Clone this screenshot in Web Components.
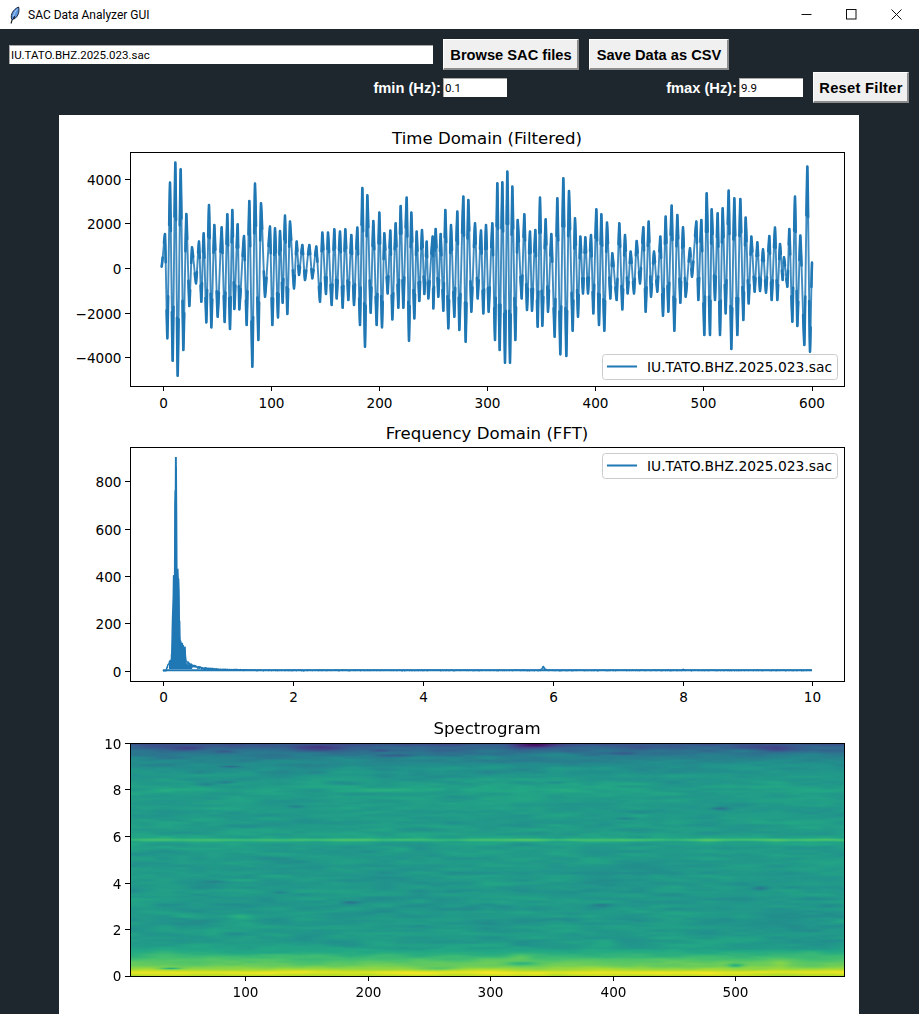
<!DOCTYPE html>
<html>
<head>
<meta charset="utf-8">
<title>SAC Data Analyzer GUI</title>
<style>
    html, body { margin: 0; padding: 0; height: 100%; overflow: hidden; background: #1e272e; }
</style>
</head>
<body>
<sac-window>
    <sac-titlebar slot="title">SAC Data Analyzer GUI</sac-titlebar>
    <sac-toolbar slot="tools">
        <sac-entry slot="file" style="width:424px">IU.TATO.BHZ.2025.023.sac</sac-entry>
        <sac-button slot="browse" style="width:136px">Browse SAC files</sac-button>
        <sac-button slot="save" style="width:140px">Save Data as CSV</sac-button>
        <sac-field slot="fmin" label="fmin (Hz):">0.1</sac-field>
        <sac-field slot="fmax" label="fmax (Hz):">9.9</sac-field>
        <sac-button slot="reset" style="width:96px;letter-spacing:.3px">Reset Filter</sac-button>
    </sac-toolbar>
    <sac-panel slot="panel">
        <sac-time-plot></sac-time-plot>
        <sac-fft-plot></sac-fft-plot>
        <sac-spectrogram></sac-spectrogram>
    </sac-panel>
</sac-window>

<script>
const FONT_UI = 'Roboto, "Open Sans", sans-serif';
const FONT_BOLD = '"Liberation Sans", Arial, sans-serif';
const FONT_PLOT = '"DejaVu Sans", sans-serif';
const BLUE = '#1f77b4';
const FILE_NAME = 'IU.TATO.BHZ.2025.023.sac';

// extremes of the trace, read off the reference crops (crop x, crop y, 3x scale)
const WAVE_LEFT = [315,342,330,188,346,128,362,148,379,282,396,382,417,365,431,340,447,255,463,315,485,322,502,283,517,270,533,313,552,348,568,243,585,191,603,250,630,320,645,325,660,333,675,287,690,305,710,365,727,375,748,375,769,380,787,338,804,338,823,328,840,335,856,328,874,345,892,323,907,204,922,226,940,303,958,278,973,340,991,332,1007,310,1022,258,1040,233,1054,278,1070,335,1086,330,1100,365,1118,350,1127,327,1142,342,1156,270,1173,315,1192,275,
    322,655,338,722,353,767,370,690,388,558,408,490,424,545,439,607,454,622,473,590,494,606,510,627,523,567,538,568,560,615,577,740,595,660,615,530,637,615,654,592,668,548,682,582,702,505,717,465,735,480,757,475,780,545,798,522,815,555,830,535,848,563,865,540,882,555,900,615,915,680,932,578,950,615,966,622,983,520,997,598,1015,563,1030,563,1047,662,1063,595,1078,543,1093,522,1105,535,1120,565,1135,530,1150,572,1165,625,1183,590,1198,630];
const WAVE_RIGHT = [10,230,25,240,45,310,63,332,78,315,97,310,112,190,127,187,142,155,157,200,173,300,193,283,210,335,226,330,240,233,257,298,274,342,292,235,310,175,327,213,345,295,361,350,376,352,393,345,409,268,424,283,441,308,457,400,478,310,495,345,512,395,530,363,550,322,566,305,582,395,601,350,617,290,635,257,652,285,669,322,690,385,709,305,724,300,740,220,755,268,773,280,788,265,806,212,823,235,841,237,857,293,874,350,892,367,909,388,928,348,945,323,960,372,972,412,988,327,1005,230,1021,347,1042,140,
    17,665,34,575,53,535,70,580,86,575,105,660,119,690,135,728,150,728,166,660,185,535,201,570,216,572,233,620,247,617,264,575,284,650,301,703,319,708,338,632,354,590,369,520,384,520,400,580,417,615,433,632,451,535,470,540,487,568,503,520,522,520,540,490,557,575,573,530,592,515,609,587,625,575,643,632,661,548,677,530,696,470,715,540,733,645,750,645,765,540,780,645,797,580,814,687,832,645,850,600,866,550,884,515,900,513,918,518,935,540,952,540,968,480,982,500,997,605,1012,618,1033,675,1050,695];

function rng(seed) {
    let s = seed;
    return () => {
        s = (s * 1664525 + 1013904223) >>> 0;
        return s / 4294967296;
    };
}

function lerpTable(table, x) {
    if (x <= table[0][0]) return table[0][1];
    for (let i = 1; i < table.length; i++) {
        if (x <= table[i][0]) {
            const a = table[i - 1], b = table[i];
            return a[1] + (b[1] - a[1]) * (x - a[0]) / (b[0] - a[0]);
        }
    }
    return table[table.length - 1][1];
}

// Everything in the svg is in page pixels, the viewBox takes care of the offset.
function axesSvg(o) {
    const { top, bottom, title, viewBox, xTicks, yTicks, xLabelY, inner = '', legend, titleY = top - 8 } = o;
    const left = 130, right = 844;
    let s = `<svg xmlns="http://www.w3.org/2000/svg" viewBox="${viewBox}" width="800" height="${viewBox.split(' ')[3]}">`;
    s += inner;
    s += `<text x="487" y="${titleY}" text-anchor="middle" font-size="16.6">${title}</text>`;
    xTicks.forEach(([x, label]) => {
        s += `<line x1="${x}" x2="${x}" y1="${bottom}" y2="${bottom + 5}" stroke="#000" shape-rendering="crispEdges"/>`;
        s += `<text x="${x}" y="${xLabelY}" text-anchor="middle" font-size="13.6">${label}</text>`;
    });
    yTicks.forEach(([y, label]) => {
        s += `<line x1="${left - 5}" x2="${left}" y1="${y}" y2="${y}" stroke="#000" shape-rendering="crispEdges"/>`;
        s += `<text x="${left - 8.5}" y="${y + 5}" text-anchor="end" font-size="13.6">${label}</text>`;
    });
    s += `<rect x="${left}.5" y="${top}.5" width="${right - left}" height="${bottom - top}" fill="none" stroke="#000" shape-rendering="crispEdges"/>`;
    if (legend !== undefined) {
        s += `<rect x="602.5" y="${legend}.5" width="235" height="25" rx="3" fill="#fff" fill-opacity=".8" stroke="#ccc"/>`;
        s += `<line x1="607" x2="637" y1="${legend + 12.5}" y2="${legend + 12.5}" stroke="${BLUE}" stroke-width="2"/>`;
        s += `<text x="647" y="${legend + 17.5}" font-size="13.85">${FILE_NAME}</text>`;
    }
    return s + '</svg>';
}

const plotStyle = `
    :host { display: block; position: relative; font-family: ${FONT_PLOT}; }
    svg { display: block; position: relative; }
    svg text { fill: #000; }
`;

class cWindow extends HTMLElement {
    constructor() {
        super();
        const template = document.createElement('template');
        template.innerHTML = `
            <style>
                :host { display: flex; flex-direction: column; height: 100vh; background: #1e272e; }
                .grow { flex: 1; min-height: 0; display: flex; padding-left: 59px; }
            </style>
            <slot name="title"></slot>
            <slot name="tools"></slot>
            <div class="grow"><slot name="panel"></slot></div>
        `;
        this.attachShadow({mode: 'open'});
        this.shadowRoot.appendChild(template.content.cloneNode(true));
    }
}

class cTitlebar extends HTMLElement {
    constructor() {
        super();
        const template = document.createElement('template');
        template.innerHTML = `
            <style>
                :host {
                    display: flex; align-items: center; height: 29px; background: #fff; color: #000;
                    font: 12px ${FONT_UI};
                }
                .icon { width: 18px; height: 18px; margin: 0 3px 0 7px; flex: none; }
                .name { flex: 1; white-space: nowrap; }
                .ctl { width: 45px; height: 29px; display: flex; align-items: center; justify-content: center; }
                .ctl svg { display: block; }
            </style>
            <svg class="icon" viewBox="0 0 18 18">
                <path d="M4 17.5 L6 11" stroke="#111" stroke-width="1.1" fill="none"/>
                <path d="M4.6 13 C3.4 8.5 6 3.5 11.6 1 C12.6 5 11.6 10.5 7 13 L7.4 10 L6 13.8 Z" fill="#5b93dc" stroke="#16223e" stroke-width="1"/>
                <path d="M10.4 3.2 C8.4 5 7 7.6 6.4 10.6" stroke="#bcd6f5" stroke-width=".9" fill="none"/>
            </svg>
            <span class="name"><slot></slot></span>
            <span class="ctl"><svg width="11" height="11" viewBox="0 0 11 11"><path d="M.5 5.5H10.5" stroke="#111" fill="none"/></svg></span>
            <span class="ctl"><svg width="11" height="11" viewBox="0 0 11 11"><rect x=".5" y=".5" width="9.5" height="9.5" stroke="#111" fill="none"/></svg></span>
            <span class="ctl"><svg width="11" height="11" viewBox="0 0 11 11"><path d="M.5 .5L10.5 10.5M10.5 .5L.5 10.5" stroke="#111" fill="none"/></svg></span>
        `;
        this.attachShadow({mode: 'open'});
        this.shadowRoot.appendChild(template.content.cloneNode(true));
    }
}

class cToolbar extends HTMLElement {
    constructor() {
        super();
        const template = document.createElement('template');
        template.innerHTML = `
            <style>
                :host { display: flex; flex-direction: column; gap: 2px; height: 86px; box-sizing: border-box; padding-top: 10px; }
                .row { display: flex; align-items: center; height: 31px; }
                .one { padding-left: 9px; gap: 10px; }
                .two { padding-right: 10px; }
                .fmin { width: 507px; display: flex; justify-content: flex-end; }
                .rest { flex: 1; display: flex; justify-content: flex-end; align-items: center; gap: 10px; }
            </style>
            <div class="row one">
                <slot name="file"></slot>
                <slot name="browse"></slot>
                <slot name="save"></slot>
            </div>
            <div class="row two">
                <div class="fmin"><slot name="fmin"></slot></div>
                <div class="rest"><slot name="fmax"></slot><slot name="reset"></slot></div>
            </div>
        `;
        this.attachShadow({mode: 'open'});
        this.shadowRoot.appendChild(template.content.cloneNode(true));
    }
}

class cEntry extends HTMLElement {
    constructor() {
        super();
        const template = document.createElement('template');
        template.innerHTML = `
            <style>
                :host {
                    display: block; box-sizing: border-box; height: 19px; background: #fff; color: #000;
                    font: normal 11.5px/18px ${FONT_UI}; padding-left: 1px; white-space: nowrap; overflow: hidden;
                    border-top: 1px solid #a8a8a8; border-left: 1px solid #a8a8a8;
                }
            </style>
            <slot></slot>
        `;
        this.attachShadow({mode: 'open'});
        this.shadowRoot.appendChild(template.content.cloneNode(true));
    }
}

class cButton extends HTMLElement {
    constructor() {
        super();
        const template = document.createElement('template');
        template.innerHTML = `
            <style>
                :host {
                    display: flex; align-items: center; justify-content: center; box-sizing: border-box; height: 31px;
                    background: #f0f0f0; color: #000; font: bold 14.67px ${FONT_BOLD}; white-space: nowrap;
                    border-style: solid; border-width: 1px 2px 2px 1px;
                    border-color: #fff #8c8c8c #8c8c8c #fff; padding: 1px 0 0 1px;
                }
            </style>
            <slot></slot>
        `;
        this.attachShadow({mode: 'open'});
        this.shadowRoot.appendChild(template.content.cloneNode(true));
    }
}

class cField extends HTMLElement {
    constructor() {
        super();
        const template = document.createElement('template');
        template.innerHTML = `
            <style>
                :host { display: flex; align-items: center; gap: 2px; color: #fff; font: bold 14.67px ${FONT_BOLD}; white-space: nowrap; }
                sac-entry { width: 64px; }
            </style>
            <span id="label"></span>
            <sac-entry><slot></slot></sac-entry>
        `;
        this.attachShadow({mode: 'open'});
        this.shadowRoot.appendChild(template.content.cloneNode(true));
    }

    connectedCallback() {
        this.shadowRoot.querySelector('#label').textContent = this.getAttribute('label');
    }
}

class cPanel extends HTMLElement {
    constructor() {
        super();
        const template = document.createElement('template');
        template.innerHTML = `
            <style>
                :host { display: block; width: 800px; background: #fff; overflow: hidden; }
            </style>
            <slot></slot>
        `;
        this.attachShadow({mode: 'open'});
        this.shadowRoot.appendChild(template.content.cloneNode(true));
    }
}

class cTimePlot extends HTMLElement {
    constructor() {
        super();
        this.attachShadow({mode: 'open'});
        const pts = [[305, 440, 60, 120]];
        const add = (arr, ox) => {
            for (let i = 0; i < arr.length; i += 2) pts.push([arr[i], arr[i + 1], ox, 120]);
        };
        add(WAVE_LEFT, 60);
        add(WAVE_RIGHT, 460);
        const page = pts.map(([x, y, ox, oy]) => [ox + x / 3, oy + y / 3]).sort((a, b) => a[0] - b[0]);
        page.push([460 + 1056 / 3, 120 + 428 / 3]);
        const rand = rng(5);
        // the slopes come out a bit paler in the reference, the tips heavy: two layers
        let pale = `M${page[0][0].toFixed(2)} ${page[0][1].toFixed(2)}`;
        let tips = '';
        for (let i = 1; i < page.length; i++) {
            const [x0, y0] = page[i - 1], [x1, y1] = page[i];
            const steps = 10;
            let prevX = x0, prevY = y0;
            for (let k = 1; k <= steps; k++) {
                const t = k / steps;
                // mostly straight flanks, so the tips stay narrow
                const e = .3 * (1 - Math.cos(Math.PI * t)) / 2 + .7 * t;
                const wob = (k < steps) ? (rand() - .5) * .7 : 0;
                const x = x0 + (x1 - x0) * t;
                const y = y0 + (y1 - y0) * e + wob;
                pale += `L${x.toFixed(2)} ${y.toFixed(2)}`;
                if (t <= .3 || t > .7) {
                    tips += `M${prevX.toFixed(2)} ${prevY.toFixed(2)}L${x.toFixed(2)} ${y.toFixed(2)}`;
                }
                prevX = x; prevY = y;
            }
        }
        this.shadowRoot.innerHTML = `<style>${plotStyle}</style>` + axesSvg({
            viewBox: '59 115 800 295', top: 152, bottom: 386, xLabelY: 408,
            title: 'Time Domain (Filtered)',
            xTicks: [[163.5,'0'],[271.5,'100'],[379.5,'200'],[487.5,'300'],[595.5,'400'],[703.5,'500'],[812,'600']],
            yTicks: [[179.5,'4000'],[223.5,'2000'],[268.5,'0'],[313.5,'\u22122000'],[357.5,'\u22124000']],
            inner: `<path d="${pale}" fill="none" stroke="${BLUE}" stroke-opacity=".85" stroke-width="1.9" stroke-linejoin="round"/>
                    <path d="${tips}" fill="none" stroke="${BLUE}" stroke-width="2.6" stroke-linecap="round"/>`,
            legend: 354
        });
    }
}

class cFftPlot extends HTMLElement {
    constructor() {
        super();
        this.attachShadow({mode: 'open'});
        const rand = rng(77);
        // upper outline of the spectrum, page px x / page px y
        const outline = [[162,671],[166,670.5],[168,663],[171,659],[172,635],[173.5,575],[174.6,567],[175,457],[176.5,457],[176.8,567],[178.8,567],[180,637],[184,647],[185.4,647],[186,660],[193,665],[203,667.5],[220,669],[260,670],[540,670],[542,668.5],[543.5,665],[545,668.5],[547,670],[682,670],[683,669],[685,670],[812,670]];
        let d = 'M163 671';
        for (let x = 163; x <= 812; x += 0.34) {
            const up = lerpTable(outline, x);
            const amp = 671 - up;
            const y = 671 - amp * Math.pow(rand(), 0.3);
            d += `L${x.toFixed(2)} ${y.toFixed(2)}`;
        }
        // the body around the peak reads as solid
        let body = 'M169 669';
        for (let x = 169; x <= 192; x += 0.5) body += `L${x} ${(lerpTable(outline, x) + (x > 175 && x < 177 ? 0 : 1.5 + rand() * 2)).toFixed(2)}`;
        body += 'L192 669Z';
        this.shadowRoot.innerHTML = `<style>${plotStyle}</style>` + axesSvg({
            viewBox: '59 410 800 295', top: 447, bottom: 681, xLabelY: 702,
            title: 'Frequency Domain (FFT)',
            xTicks: [[163.5,'0'],[293.5,'2'],[423.5,'4'],[553.5,'6'],[683.5,'8'],[812.5,'10']],
            yTicks: [[481.5,'800'],[529.5,'600'],[576.5,'400'],[623.5,'200'],[671.5,'0']],
            inner: `<path d="${body}" fill="${BLUE}"/>
                    <rect x="174.9" y="457" width="1.8" height="110" fill="${BLUE}"/>
                    <path d="${d}" fill="none" stroke="${BLUE}" stroke-width="1.4" stroke-linejoin="round"/>
                    <line x1="163" x2="812" y1="670.2" y2="670.2" stroke="${BLUE}" stroke-width="2"/>`,
            legend: 453
        });
    }
}

class cSpectrogram extends HTMLElement {
    constructor() {
        super();
        this.attachShadow({mode: 'open'});
        this.shadowRoot.innerHTML = `<style>${plotStyle}
                canvas { position: absolute; left: 71px; top: 38px; width: 714px; height: 233px; }
            </style>
            <canvas width="714" height="233"></canvas>` + axesSvg({
            viewBox: '59 705 800 309', top: 743, bottom: 976, xLabelY: 997, titleY: 734,
            title: 'Spectrogram',
            xTicks: [[245.5,'100'],[368.5,'200'],[490.5,'300'],[613.5,'400'],[735.5,'500']],
            yTicks: [[743.5,'10'],[789.5,'8'],[836.5,'6'],[883.5,'4'],[929.5,'2'],[976,'0']]
        });
        this.paint(this.shadowRoot.querySelector('canvas'));
    }

    paint(canvas) {
        const W = 714, H = 233;
        const ctx = canvas.getContext('2d');
        const img = ctx.createImageData(W, H);
        const viridis = [[68,1,84],[72,36,117],[65,68,135],[53,95,141],[42,120,142],[33,145,140],[34,168,132],[68,191,112],[122,209,81],[189,223,38],[253,231,37]];
        const color = v => {
            const t = Math.max(0, Math.min(.9999, v)) * 10, i = Math.floor(t), f = t - i;
            return viridis[i].map((c, k) => c + (viridis[i + 1][k] - c) * f);
        };
        const grid = (cw, ch, seed) => {
            const r = rng(seed), cols = Math.ceil(W / cw) + 2, rows = Math.ceil(H / ch) + 2, g = [];
            for (let i = 0; i < cols * rows; i++) g.push(r() - .5);
            const sm = t => t * t * (3 - 2 * t);
            return (x, y) => {
                const gx = x / cw, gy = y / ch, ix = Math.floor(gx), iy = Math.floor(gy);
                const fx = sm(gx - ix), fy = sm(gy - iy);
                const a = g[iy * cols + ix], b = g[iy * cols + ix + 1], c = g[(iy + 1) * cols + ix], d = g[(iy + 1) * cols + ix + 1];
                return (a + (b - a) * fx) * (1 - fy) + (c + (d - c) * fx) * fy;
            };
        };
        const n1 = grid(36, 3.6, 11), n2 = grid(17, 2.4, 23), n3 = grid(90, 14, 37);
        // vertical profile, y measured from top of the image
        const profile = [[0,.25],[3,.3],[8,.38],[14,.44],[24,.50],[36,.53],[46,.56],[60,.54],[90,.54],[150,.53],[180,.53],[198,.54],[205,.57],[211,.64],[217,.72],[222,.77],[226,.86],[229,.97],[232,.9],[233,.8]];
        // hand placed streaks: page x, page y, half width, half height, amount
        const blobs = [
            [185,748,14,2,-.13],[225,751,10,1.5,-.1],[320,748,22,3,-.14],[395,755,22,1.6,-.1],[230,766,10,1,-.12],
            [535,744,22,3,-.2],[775,748,30,3,-.1],[625,753,14,1.5,-.08],[205,784,9,2,-.1],[225,782,9,1.5,-.1],
            [295,806,8,1.5,-.09],[350,902,9,1.3,-.13],[280,892,9,1.3,-.1],[215,881,12,1.5,-.09],
            [720,808,9,1.5,-.14],[555,782,9,1.5,-.11],[625,818,10,1.3,-.1],[760,888,8,2,-.11],[600,905,10,2,-.09],
            [240,916,14,3,.09],[190,916,14,2,.05],[845,921,16,2,.07],[400,850,15,3,.05],[380,750,10,1.5,-.1],
            [170,968,10,1,-.2],[735,965,8,2,-.15],[520,963,15,2,-.1],[780,963,10,3,.05],[440,968,20,2,-.1],[520,957,12,5,.06]
        ];
        for (let y = 0; y < H; y++) {
            for (let x = 0; x < W; x++) {
                let v = lerpTable(profile, y);
                const scale = y > 205 ? .7 : 1;
                v += (n1(x, y) * .075 + n2(x, y) * .045 + n3(x, y) * .015) * scale;
                // 5.85 Hz line
                const dl = y - 96.5;
                v += .11 * Math.exp(-dl * dl / 2.2) + .04 * Math.exp(-dl * dl / 16);
                // faint 8 Hz band
                const d8 = y - 47;
                v += .012 * Math.exp(-d8 * d8 / 5);
                for (const [bx, by, bw, bh, amt] of blobs) {
                    const dx = (x + 130 - bx) / bw, dy = (y + 743 - by) / bh;
                    const q = dx * dx + dy * dy;
                    if (q < 6) v += amt * Math.exp(-q);
                }
                const [r, g, b] = color(v);
                const i = (y * W + x) * 4;
                img.data[i] = r; img.data[i + 1] = g; img.data[i + 2] = b; img.data[i + 3] = 255;
            }
        }
        ctx.putImageData(img, 0, 0);
    }
}

customElements.define('sac-window', cWindow);
customElements.define('sac-titlebar', cTitlebar);
customElements.define('sac-toolbar', cToolbar);
customElements.define('sac-entry', cEntry);
customElements.define('sac-button', cButton);
customElements.define('sac-field', cField);
customElements.define('sac-panel', cPanel);
customElements.define('sac-time-plot', cTimePlot);
customElements.define('sac-fft-plot', cFftPlot);
customElements.define('sac-spectrogram', cSpectrogram);
</script>
</body>
</html>
